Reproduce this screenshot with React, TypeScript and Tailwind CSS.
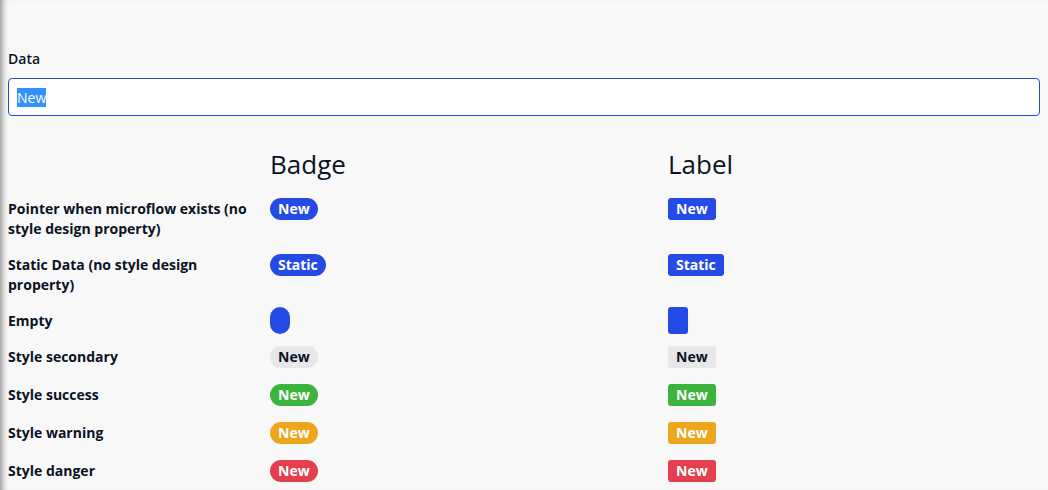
import React from 'react';

type Variant = 'primary' | 'secondary' | 'success' | 'warning' | 'danger';

interface Row {
  label: string;
  text: string;
  variant: Variant;
}

const variantClass: Record<Variant, string> = {
  primary: 'bg-[#264ae5] text-white',
  secondary: 'bg-[#e7e7e9] text-[#0a1325]',
  success: 'bg-[#3cb33d] text-white',
  warning: 'bg-[#eca51c] text-white',
  danger: 'bg-[#e33f4e] text-white',
};

const rows: Row[] = [
  { label: 'Pointer when microflow exists (no style design property)', text: 'New', variant: 'primary' },
  { label: 'Static Data (no style design property)', text: 'Static', variant: 'primary' },
  { label: 'Empty', text: '', variant: 'primary' },
  { label: 'Style secondary', text: 'New', variant: 'secondary' },
  { label: 'Style success', text: 'New', variant: 'success' },
  { label: 'Style warning', text: 'New', variant: 'warning' },
  { label: 'Style danger', text: 'New', variant: 'danger' },
];

const Pill: React.FC<{ text: string; variant: Variant; rounded: string }> = ({ text, variant, rounded }) => {
  if (!text) {
    return <span className={`block w-[20px] h-[27px] -mt-1 -mb-[3px] ${rounded} ${variantClass[variant]}`} />;
  }
  return (
    <span
      className={`inline-block h-[22px] px-2 -mt-px mb-px text-sm font-bold leading-[22px] ${rounded} ${variantClass[variant]}`}
    >
      {text}
    </span>
  );
};

export default function App() {
  return (
    <div
      className="min-h-[490px] bg-[#f8f8f8] text-[#0a1325] px-2 pt-[49px] shadow-[inset_7px_0_6px_-5px_rgba(0,0,0,0.45)]"
      style={{ fontFamily: '"Open Sans", "Noto Sans", sans-serif' }}
    >
      <div className="text-sm leading-5 font-semibold mb-[9px]">Data</div>
      <div className="h-[38px] flex items-center bg-white border border-[#264ae5] rounded-[4px] px-2 text-sm">
        <span className="bg-[#3390ff] text-white leading-[19px]">New</span>
      </div>

      <div className="mt-8">
        <div className="grid grid-cols-[262px_398px_1fr] pb-[11px]">
          <div />
          <div className="text-[26px] leading-8 font-medium">Badge</div>
          <div className="text-[26px] leading-8 font-medium">Label</div>
        </div>
        {rows.map((row) => (
          <div key={row.label} className="grid grid-cols-[262px_398px_1fr] py-2 items-start">
            <div className="text-sm leading-5 font-bold pr-2">{row.label}</div>
            <div className="flex">
              <Pill text={row.text} variant={row.variant} rounded="rounded-full" />
            </div>
            <div className="flex">
              <Pill text={row.text} variant={row.variant} rounded="rounded-[3px]" />
            </div>
          </div>
        ))}
      </div>
    </div>
  );
}
